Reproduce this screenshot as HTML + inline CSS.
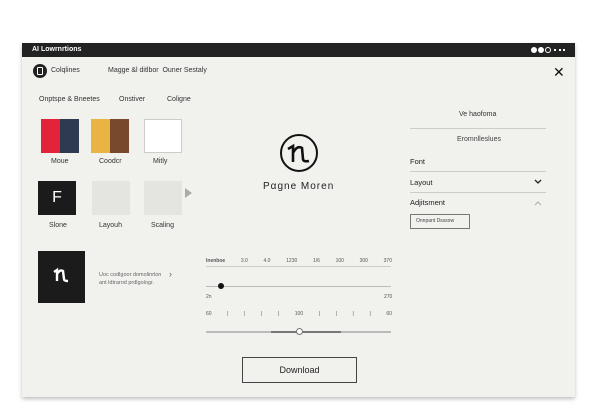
<!DOCTYPE html>
<html><head><style>
*{margin:0;padding:0;box-sizing:border-box}
body{width:600px;height:420px;background:#fff;font-family:"Liberation Sans",sans-serif;position:relative;overflow:hidden;color:#222}
.a{position:absolute}
.win{left:22px;top:43px;width:553px;height:354px;background:#f1f1ee;box-shadow:0 2px 4px rgba(0,0,0,.25)}
.t{font-size:7px;color:#333}
.sw{position:absolute;width:38px;height:34px}
.line{position:absolute;height:1px;background:#ccc}
</style></head><body>
<div class="a win"></div>
<div class="a" style="left:22px;top:43px;width:553px;height:14px;background:#222"></div>
<div class="a" style="left:32px;top:46px;font-size:7px;color:#fff;font-weight:bold">AI Lowrnrtions</div>
<div class="a" style="left:531px;top:47px;width:6px;height:6px;border-radius:50%;background:#fff"></div>
<div class="a" style="left:538px;top:47px;width:6px;height:6px;border-radius:50%;background:#fff"></div>
<div class="a" style="left:545px;top:47px;width:6px;height:6px;border-radius:50%;border:1px solid #fff"></div>
<div class="a" style="left:554px;top:49px;width:11px;height:2px;border-top:2px dotted #fff"></div>

<div class="a" style="left:33px;top:64px;width:14px;height:14px;border-radius:50%;background:#222"></div>
<div class="a" style="left:37px;top:67px;width:6px;height:8px;border:1px solid #fff;border-radius:1px"></div>
<div class="a t" style="left:51px;top:67px">Colqlines</div>
<div class="a t" style="left:108px;top:67px">Magge &amp;l ditlbor &nbsp;Ouner Sestaly</div>
<div class="a" style="left:553px;top:64px;font-size:14px;color:#111">✕</div>

<div class="a t" style="left:39px;top:96px">Onptspe &amp; Bneetes</div>
<div class="a t" style="left:119px;top:96px">Onstiver</div>
<div class="a t" style="left:167px;top:96px">Coligne</div>

<div class="sw" style="left:41px;top:119px;background:linear-gradient(90deg,#e3233a 50%,#2d3a4f 50%)"></div>
<div class="sw" style="left:91px;top:119px;background:linear-gradient(90deg,#e9b443 50%,#78492a 50%)"></div>
<div class="sw" style="left:144px;top:119px;background:#fff;border:1px solid #ccc"></div>
<div class="a t" style="left:51px;top:158px">Moue</div>
<div class="a t" style="left:99px;top:158px">Coodcr</div>
<div class="a t" style="left:153px;top:158px">Mitly</div>

<div class="sw" style="left:38px;top:181px;background:#1b1b1b;color:#fff;font-size:16px;text-align:center;line-height:34px">F</div>
<div class="sw" style="left:92px;top:181px;background:#e4e4e1"></div>
<div class="sw" style="left:144px;top:181px;background:#e4e4e1"></div>
<div class="a" style="left:185px;top:188px;width:0;height:0;border-left:7px solid #aaa;border-top:5px solid transparent;border-bottom:5px solid transparent"></div>
<div class="a t" style="left:49px;top:222px">Slone</div>
<div class="a t" style="left:99px;top:222px">Layouh</div>
<div class="a t" style="left:151px;top:222px">Scaling</div>

<div class="a" style="left:38px;top:251px;width:47px;height:52px;background:#1b1b1b"></div>
<svg class="a" style="left:52px;top:266px" width="18" height="18" viewBox="0 0 18 18"><path d="M2 6 L5 4 L5 15 M5 8 Q8 3 11 5 L12 13 Q12 15 16 15" fill="none" stroke="#fff" stroke-width="2.4"/></svg>
<div class="a" style="left:99px;top:271px;font-size:5.5px;color:#666;line-height:8px">Uoc codlgoor domolinrlon<br>ant ldtrarod prdlgologr.</div>
<div class="a" style="left:169px;top:269px;font-size:9px;color:#666">›</div>

<div class="a" style="left:280px;top:134px;width:38px;height:38px;border-radius:50%;border:2.5px solid #111"></div>
<svg class="a" style="left:285px;top:141px" width="28" height="26" viewBox="0 0 28 26"><path d="M3 8 L8 5 L8 21 M8 12 Q12 4 17 7 L18 18 Q18 21 24 20" fill="none" stroke="#111" stroke-width="2.6"/></svg>
<div class="a" style="left:263px;top:181px;font-size:10px;letter-spacing:1px;color:#222">Pαgne Moren</div>

<div class="a" style="left:206px;top:258px;font-size:5px;color:#555;width:186px;display:flex;justify-content:space-between"><b>lnenboe</b><span>3.0</span><span>4.0</span><span>1230</span><span>1/6</span><span>100</span><span>300</span><span>370</span></div>
<div class="line" style="left:206px;top:266px;width:185px"></div>
<div class="line" style="left:206px;top:286px;width:185px;background:#bbb"></div>
<div class="a" style="left:218px;top:283px;width:6px;height:6px;border-radius:50%;background:#111"></div>
<div class="a" style="left:206px;top:294px;font-size:5px;color:#555">2n</div>
<div class="a" style="left:384px;top:294px;font-size:5px;color:#555">270</div>
<div class="a" style="left:206px;top:311px;font-size:5px;color:#555;width:186px;display:flex;justify-content:space-between"><span>60</span><span>|</span><span>|</span><span>|</span><span>|</span><span>100</span><span>|</span><span>|</span><span>|</span><span>|</span><span>60</span></div>
<div class="line" style="left:206px;top:331px;width:185px;height:1.5px;background:#bbb"></div>
<div class="line" style="left:271px;top:331px;width:70px;height:1.5px;background:#777"></div>
<div class="a" style="left:296px;top:328px;width:7px;height:7px;border-radius:50%;background:#fff;border:1px solid #777"></div>

<div class="a" style="left:242px;top:357px;width:115px;height:26px;border:1px solid #444;font-size:9px;text-align:center;line-height:24px;color:#222">Download</div>

<div class="a t" style="left:459px;top:111px">Ve haofoma</div>
<div class="line" style="left:410px;top:128px;width:136px"></div>
<div class="a t" style="left:457px;top:136px;color:#444">Eromnlleslues</div>
<div class="a" style="left:410px;top:157px;font-size:7.5px">Font</div>
<div class="line" style="left:410px;top:171px;width:136px"></div>
<div class="a" style="left:410px;top:178px;font-size:7.5px">Layout</div>
<svg class="a" style="left:534px;top:179px" width="8" height="6" viewBox="0 0 8 6"><path d="M1 1 L4 4 L7 1" fill="none" stroke="#222" stroke-width="1.3"/></svg>
<div class="line" style="left:410px;top:192px;width:136px"></div>
<div class="a" style="left:410px;top:198px;font-size:7.5px">Adjitsment</div>
<svg class="a" style="left:534px;top:200px" width="8" height="6" viewBox="0 0 8 6"><path d="M1 5 L4 2 L7 5" fill="none" stroke="#aaa" stroke-width="1"/></svg>
<div class="a" style="left:410px;top:214px;width:60px;height:15px;border:1px solid #777;font-size:5px;line-height:13px;padding-left:5px;color:#444">Onnpant Dsssow</div>
</body></html>
